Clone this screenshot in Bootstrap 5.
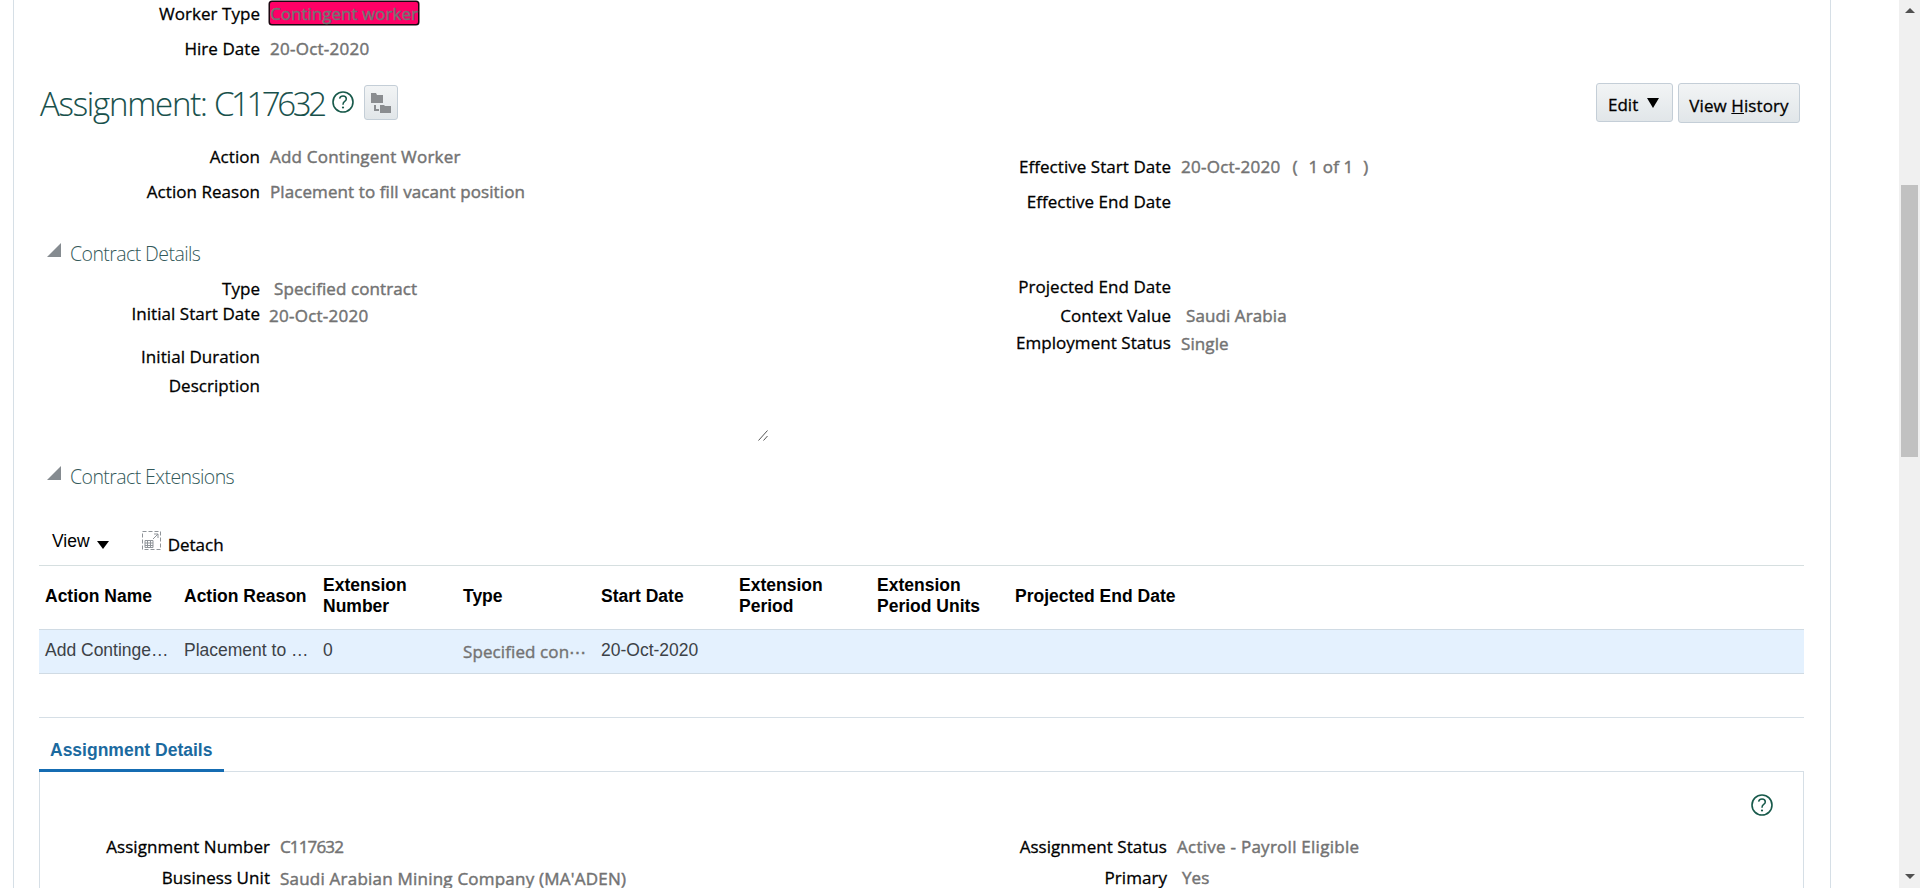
<!DOCTYPE html>
<html lang="en">
<head>
<meta charset="utf-8">
<title>Assignment: C117632</title>
<link href="https://cdn.jsdelivr.net/npm/bootstrap@5.3.0/dist/css/bootstrap.min.css" rel="stylesheet">
<script src="https://cdn.jsdelivr.net/npm/bootstrap@5.3.0/dist/js/bootstrap.bundle.min.js"></script>
<style>
body{height:888px;font:400 17px/24px "Open Sans","Noto Sans",sans-serif;color:#000;background:#fff}
.sheet{width:1818px;margin-left:13px;border:solid #d6dfe6;border-width:0 1px;padding:0 26px 0 25px;height:888px}
.fld{display:flex;height:24px;line-height:26px;white-space:nowrap;-webkit-text-stroke:.3px;letter-spacing:.05px}
.lbl{width:221px;text-align:right;flex:none}
.val{color:#737373;margin-left:10px;-webkit-text-stroke:.45px;letter-spacing:.09px}
.halves{display:grid;grid-template-columns:911px 1fr}
.g11{margin-top:11px}.g1{margin-top:1.5px}.g5{margin-top:5px}.g3{margin-top:3px}.g19{margin-top:19px}
.in4{margin-left:14px}.in5{margin-left:15px}.in9{margin-left:9px;position:relative;top:1px}.up1{position:relative;top:-1px}.d1{position:relative;top:1px}
.num{letter-spacing:.25px}.wide{letter-spacing:.22px}.tight{letter-spacing:-.85px}
.hit{background:#ff0066;box-shadow:0 0 0 1.5px #1c0710;border-radius:2px;height:22px;line-height:24px;margin-top:1px;width:148px;letter-spacing:.02px}
.who{padding-top:1px;height:83px}
.ttl{font-size:33px;font-weight:300;line-height:42px;letter-spacing:-1.25px;color:#17504b;margin:0;width:293px;white-space:nowrap;-webkit-text-stroke:.1px;padding-left:1px}
.ttl span{letter-spacing:-3.4px}
.titlebar{height:40px}
.obtn{background:linear-gradient(#f2f4f5,#e1e6e9);border:1px solid #c4ced7;border-radius:3px;color:#000;font-size:17px;line-height:24px;padding:0;-webkit-text-stroke:.3px}
.b-edit{width:77px;height:39px;padding-top:9px}
.b-hist{width:122px;height:40px;padding-top:5px;margin-right:4px;letter-spacing:.1px}
.b-tree{width:34px;height:35px;margin:2px 0 0 10px}
.act{height:118px;padding-top:21px}
.act>:last-child{padding-top:10px}
.sec{height:24px;font-size:19.5px;font-weight:300;color:#33595a;letter-spacing:-.58px;padding-left:8px;margin:0;line-height:26px;gap:9px;display:flex;white-space:nowrap}
.sec svg{margin-top:2px}
.contract{height:199px;padding-top:11px}
.contract>:last-child{margin-top:-2px}
.grip{margin:32px 0 0 719px;display:block}
.bar{height:77px;padding:43px 0 0 13px;font:17.5px/24px "Liberation Sans",Arial,sans-serif}
.bar .detach{font:17px/24px "Open Sans",sans-serif;-webkit-text-stroke:.3px}
.ext{font:17.5px/21px "Liberation Sans",Arial,sans-serif;border-top:1px solid #d6dfe0;width:1765px}
.cols{display:grid;grid-template-columns:139px 139px 140px 138px 138px 138px 138px 1fr;align-items:center}
.cols>*{padding-left:6px;white-space:nowrap}
.cols.hd{height:63px;font-weight:700;font-size:17.5px;padding-bottom:3px}
.cols.rw{height:45px;background:#e4f1fe;border:solid #d0dbe4;border-width:1px 0;color:#3c4247;padding-bottom:2px}
.spec{font:17px/24px "Open Sans",sans-serif;color:#737373;-webkit-text-stroke:.4px;padding-top:3px;letter-spacing:.1px}
.tabs{margin-top:43px;width:1765px;border-top:1px solid #d6dfe6;height:54px}
.tabs a{display:block;width:185px;height:54px;border-bottom:3px solid #156cb2;padding:20px 0 0 11px;font:bold 17.5px/24px "Liberation Sans",Arial,sans-serif;color:#1b6a9f;text-decoration:none;position:relative}
.pane{width:1765px;height:117px;border:solid #d6dfe6;border-width:1px 1px 0;overflow:hidden}
.pane .help{display:block;margin:22px 0 0 1711px}
.pane .halves{padding-top:18px}
.pane .lbl{width:230px}.pane .halves>:last-child .lbl{width:216px}
.g7{margin-top:7px}
.scroll{position:absolute;right:0;top:0;width:21px;height:888px;background:#f0f0f0;display:flex;flex-direction:column;align-items:center}
.thumb{width:17px;height:272px;background:#c1c1c1;margin-top:172px}
</style>
</head>
<body class="overflow-hidden position-relative">
<svg width="0" height="0" class="position-absolute"><defs>
<symbol id="q" viewBox="0 0 22 22"><circle cx="11" cy="11" r="10" fill="none" stroke="#17594a" stroke-width="1.6"/><path d="M7.6 7.6Q8.2 5 11 5Q14.3 5 14.3 7.9Q14.3 9.4 12.4 10.6Q11 11.6 11 13.7" fill="none" stroke="#17594a" stroke-width="1.5"/><circle cx="11" cy="16.5" r="1.1" fill="#17594a"/></symbol>
</defs></svg>
<main class="sheet">
  <section class="who">
    <div class="fld"><span class="lbl">Worker Type</span><span class="val hit">Contingent worker</span></div>
    <div class="fld g11"><span class="lbl">Hire Date</span><span class="val num">20-Oct-2020</span></div>
  </section>
  <header class="titlebar d-flex align-items-start">
    <h1 class="ttl">Assignment: <span>C117632</span></h1>
    <svg width="22" height="22" style="margin-top:8px"><use href="#q"/></svg>
    <button class="obtn b-tree" aria-label="Hierarchy"><svg class="d-block mx-auto" width="22" height="22" fill="#8a8d90"><path d="M1 1h5l1 2h6v8H1zM10 13h4l1 1h6v7H10zM4 13h2v4h3v2H4z"/></svg></button>
    <div class="d-flex ms-auto align-items-start" style="gap:5px">
      <button class="obtn b-edit d-flex"><span style="margin-left:11px">Edit</span><svg style="margin:5px 0 0 9px" width="12" height="11"><path d="M0 0h12L6 10z"/></svg></button>
      <button class="obtn b-hist">View <u>H</u>istory</button>
    </div>
  </header>
  <section class="halves act">
    <div>
      <div class="fld"><span class="lbl">Action</span><span class="val wide">Add Contingent Worker</span></div>
      <div class="fld g11"><span class="lbl">Action Reason</span><span class="val">Placement to fill vacant position</span></div>
    </div>
    <div>
      <div class="fld"><span class="lbl">Effective Start Date</span><span class="val num">20-Oct-2020</span><span class="val" style="margin-left:12px">(</span><span class="val" style="margin-left:11px">1 of 1</span><span class="val" style="margin-left:10px">)</span></div>
      <div class="fld g11"><span class="lbl">Effective End Date</span></div>
    </div>
  </section>
  <h2 class="sec"><svg width="14" height="14"><path d="M14 0v14H0z" fill="#858b90"/></svg>Contract Details</h2>
  <section class="halves contract">
    <div>
      <div class="fld"><span class="lbl">Type</span><span class="val in4">Specified contract</span></div>
      <div class="fld g1"><span class="lbl up1">Initial Start Date</span><span class="val in9 num">20-Oct-2020</span></div>
      <div class="fld g19"><span class="lbl up1">Initial Duration</span></div>
      <div class="fld g5"><span class="lbl up1">Description</span></div>
      <svg class="grip" width="10" height="11"><path d="M.5 10.5L9.5 .5M5.5 10.5L9.5 6" stroke="#555" fill="none"/></svg>
    </div>
    <div>
      <div class="fld"><span class="lbl">Projected End Date</span></div>
      <div class="fld g5"><span class="lbl">Context Value</span><span class="val in5">Saudi Arabia</span></div>
      <div class="fld g3"><span class="lbl">Employment Status</span><span class="val d1">Single</span></div>
    </div>
  </section>
  <h2 class="sec"><svg width="14" height="14"><path d="M14 0v14H0z" fill="#858b90"/></svg>Contract Extensions</h2>
  <div class="bar d-flex"><span style="margin-top:-2px">View</span><svg width="12" height="8" style="margin:10px 33px 0 7px"><path d="M0 0h12L6 8z"/></svg>
    <svg width="19" height="19" fill="none" stroke="#8f9499"><path d="M.5 .5h18v18H.5z" stroke-dasharray="4 2"/><path d="M3 9.500h8v7H3zM3 12h8M3 14.500h8M5.500 9.500v7M8.500 9.500v7M11 8l5-5M12 3h4v4"/></svg>
    <span class="detach" style="margin:2px 0 0 7px">Detach</span></div>
  <div class="ext">
    <div class="cols hd"><div>Action Name</div><div>Action Reason</div><div>Extension<br>Number</div><div>Type</div><div>Start Date</div><div>Extension<br>Period</div><div>Extension<br>Period Units</div><div>Projected End Date</div></div>
    <div class="cols rw"><div>Add Continge…</div><div>Placement to …</div><div>0</div><div class="spec">Specified con⋯</div><div>20-Oct-2020</div><div></div><div></div><div></div></div>
  </div>
  <nav class="tabs"><a href="#">Assignment Details</a></nav>
  <section class="pane">
    <svg class="help" width="22" height="22"><use href="#q"/></svg>
    <div class="halves">
      <div>
        <div class="fld"><span class="lbl">Assignment Number</span><span class="val tight">C117632</span></div>
        <div class="fld g7"><span class="lbl">Business Unit</span><span class="val wide d1">Saudi Arabian Mining Company (MA'ADEN)</span></div>
      </div>
      <div>
        <div class="fld"><span class="lbl">Assignment Status</span><span class="val" style="letter-spacing:.26px">Active - Payroll Eligible</span></div>
        <div class="fld g7"><span class="lbl">Primary</span><span class="val in5">Yes</span></div>
      </div>
    </div>
  </section>
</main>
<div class="scroll"><svg width="10" height="13"><path d="M0 13l5-5 5 5z" fill="#505050"/></svg><div class="thumb"></div><svg class="mt-auto" width="10" height="14"><path d="M0 0h10L5 5z" fill="#505050"/></svg></div>
</body>
</html>
